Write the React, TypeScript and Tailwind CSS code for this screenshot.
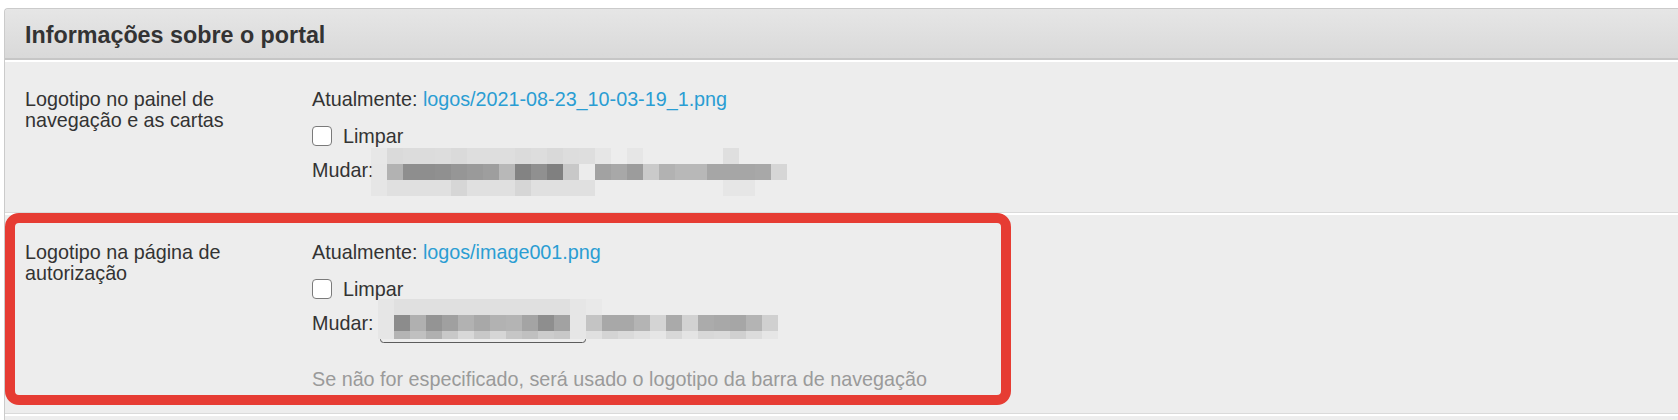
import React from "react";

const BG = 237;

const m1: number[][] = [
  [0xe2, 0xda, 0xdc, 0xdc, 0xdd, 0xda, 0xde, 0xde, 0xde, 0xdb, 0xdd, 0xd9, 0xdd, 0xde, 0xe6, BG, 0xe6, BG, BG, BG, BG, BG, 0xdf, BG, BG, BG],
  [0xe0, 0xb2, 0x8e, 0x8e, 0x90, 0x96, 0x9a, 0x9e, 0xb8, 0x83, 0x90, 0x80, 0xc8, 0xec, 0xa2, 0xa8, 0x9c, 0xca, 0xb2, 0xb8, 0xb8, 0xa6, 0xa6, 0xa6, 0xa8, 0xd6],
  [0xe0, 0xe0, 0xe0, 0xe0, 0xe0, 0xd6, 0xe0, 0xe0, 0xe0, 0xd6, 0xe0, 0xe0, 0xe0, 0xe0, BG, BG, BG, BG, BG, BG, BG, BG, 0xe6, 0xe6, BG, BG],
];

const m2: number[][] = [
  [0xe6, 0xe0, 0xe0, 0xe0, 0xe0, 0xe0, 0xe0, 0xe0, 0xe0, 0xe0, 0xe0, 0xe0, 0xe6, 0xe9, BG, BG, BG, BG, BG, BG, BG, BG, BG, BG, BG],
  [0xe6, 0x8c, 0xb0, 0x94, 0xa0, 0xb2, 0xa8, 0xb2, 0xb4, 0xa4, 0x8e, 0xa2, 0xe6, 0xc4, 0xa8, 0xa8, 0xb4, 0xd4, 0xaa, 0xd2, 0xab, 0xa8, 0xa6, 0xb4, 0xd0],
  [0xe6, 0xb4, 0xc0, 0xb0, 0xc8, 0xd8, 0xc8, 0xd6, 0xc6, 0xc0, 0xcc, 0xc8, 0xe6, 0xe0, 0xd4, 0xda, 0xe0, 0xe6, 0xd8, 0xe4, 0xd8, 0xda, 0xd0, 0xdc, 0xe6],
];

function Mosaic({ rows, heights, firstColOpacity = 1 }: { rows: number[][]; heights: number[]; firstColOpacity?: number }) {
  const w = rows[0].length * 16;
  const h = heights.reduce((a, b) => a + b, 0);
  const rects: React.ReactNode[] = [];
  let y = 0;
  rows.forEach((r, ri) => {
    r.forEach((v, ci) => {
      if (v !== BG) {
        rects.push(
          <rect
            key={`${ri}-${ci}`}
            x={ci * 16}
            y={y}
            width={16}
            height={heights[ri]}
            fill={`rgb(${v},${v},${v})`}
            fillOpacity={ci === 0 ? firstColOpacity : 1}
          />
        );
      }
    });
    y += heights[ri];
  });
  return (
    <svg width={w} height={h} viewBox={`0 0 ${w} ${h}`} shapeRendering="crispEdges" className="block">
      {rects}
    </svg>
  );
}

function Checkbox() {
  return <span className="inline-block w-[20px] h-[20px] rounded-[4px] border-[1.5px] border-[#7a7a7a] bg-white" />;
}

export default function App() {
  return (
    <div className="w-[1678px] h-[420px] overflow-hidden bg-white pl-[4px] pt-[8px] font-['Liberation_Sans',Arial,sans-serif] text-[#333]">
      <div className="h-[440px] border-l border-t border-[#cbcbcb] rounded-tl-[4px] bg-[#ededed]">
        <div className="h-[51px] border-b-2 border-[#c6c6c6] bg-gradient-to-b from-[#e6e6e6] to-[#d9d9d9] rounded-tl-[4px] flex items-center pl-[20px]">
          <h2 className="text-[23.3px] font-bold leading-none pt-[5px] text-[#333]">Informações sobre o portal</h2>
        </div>

        {/* Row 1 */}
        <div className="grid grid-cols-[307px_1fr] border-t-2 border-t-white border-b border-b-[#dadada] pt-[27px] pb-[31px] text-[19.75px]">
          <div className="pl-[20px] leading-[20.5px]">
            Logotipo no painel de
            <br />
            navegação e as cartas
          </div>
          <div className="flex flex-col">
            <div className="h-[21px] leading-[21px] whitespace-nowrap">
              Atualmente: <a className="text-[#2a9dd3]">logos/2021-08-23_10-03-19_1.png</a>
            </div>
            <div className="mt-[16px] h-[20px] flex items-center">
              <Checkbox />
              <span className="ml-[11px] leading-[20px]">Limpar</span>
            </div>
            <div className="mt-[13px] h-[22px] leading-[22px] relative">
              Mudar:
              <div className="absolute left-[59px] top-[-11px]">
                <Mosaic rows={m1} heights={[16, 16, 16]} firstColOpacity={0.55} />
              </div>
            </div>
          </div>
        </div>

        {/* Row 2 */}
        <div className="relative grid grid-cols-[307px_1fr] border-t-2 border-t-white border-b border-b-[#dadada] pt-[27px] pb-[23px] text-[19.75px]">
          <div className="pl-[20px] leading-[20.5px]">
            Logotipo na página de
            <br />
            autorização
          </div>
          <div className="flex flex-col">
            <div className="h-[21px] leading-[21px] whitespace-nowrap">
              Atualmente: <a className="text-[#2a9dd3]">logos/image001.png</a>
            </div>
            <div className="mt-[16px] h-[20px] flex items-center">
              <Checkbox />
              <span className="ml-[11px] leading-[20px]">Limpar</span>
            </div>
            <div className="mt-[13px] h-[22px] leading-[22px] relative">
              Mudar:
              <div className="absolute left-[68px] top-[24px] w-[206px] h-[7px] border-[1.5px] border-[#5c5c5c] rounded-[4px]" />
              <div className="absolute left-[66px] top-[-13px]">
                <Mosaic rows={m2} heights={[16, 16, 8]} />
              </div>
            </div>
            <div className="mt-[35px] h-[21px] leading-[21px] text-[#9a9a9a] whitespace-nowrap">
              Se não for especificado, será usado o logotipo da barra de navegação
            </div>
          </div>
          <div className="absolute left-0 top-[-2px] w-[1006px] h-[192px] border-[10px] border-[#e63c33] rounded-[14px] pointer-events-none" />
        </div>

        {/* Row 3 */}
        <div className="border-t-2 border-t-white h-[40px]" />
      </div>
    </div>
  );
}
